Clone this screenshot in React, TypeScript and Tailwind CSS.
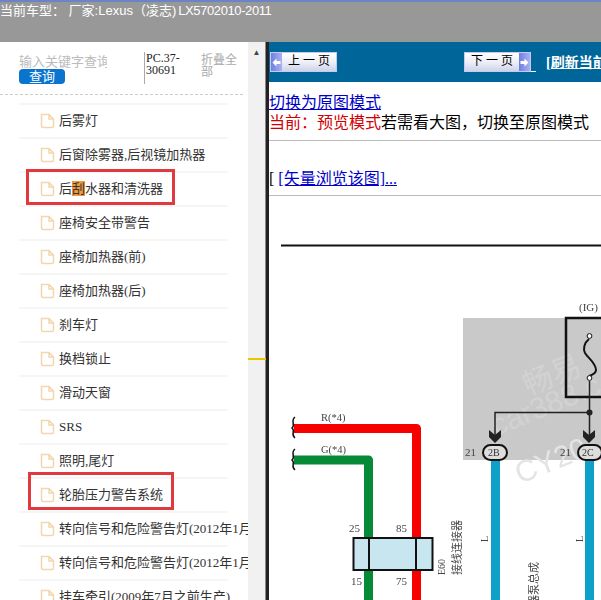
const items = [
  { label: "后雾灯" },
  { label: "后窗除雾器,后视镜加热器" },
  { label: "后刮水器和清洗器", mark: true, boxed: "h-[36px] w-[149px] -ml-[14px] pl-[11px] pt-[4px] -mt-[4px]" },
  { label: "座椅安全带警告" },
  { label: "座椅加热器(前)" },
  { label: "座椅加热器(后)" },
  { label: "刹车灯" },
  { label: "换档锁止" },
  { label: "滑动天窗" },
  { label: "SRS" },
  { label: "照明,尾灯" },
  { label: "轮胎压力警告系统", boxed: "h-[38px] w-[146px] -ml-[12px] pl-[9px] pt-[7px] -mt-[8px]" },
  { label: "转向信号和危险警告灯(2012年1月之前生产)" },
  { label: "转向信号和危险警告灯(2012年1月之后生产)" },
  { label: "挂车牵引(2009年7月之前生产)" },
];

function FileIcon() {
  return (
    <svg width="15" height="16" viewBox="0 0 15 16" fill="none" className="shrink-0">
      <path
        d="M1.5 1.5 H9 L13.5 6 V13 Q13.5 14.5 12 14.5 H3 Q1.5 14.5 1.5 13 Z M9 1.5 V6 H13.5"
        stroke="#f3d6ae"
        strokeWidth="1.5"
      />
    </svg>
  );
}

function TreeRow({ label, mark, boxed }: { label: string; mark?: boolean; boxed?: string }) {
  return (
    <div className="h-[34px] border-b-2 border-[#f6f6f6] pl-[21px] flex items-center whitespace-nowrap">
      <div className={`flex items-center gap-[4px] ${boxed ? `border-[3px] border-[#e0393e] box-border shrink-0 ${boxed}` : ""}`}>
        <FileIcon />
        <span className="text-[13px] text-[#333]">
          {mark ? (
            <>
              后<span className="bg-[#f09a3e]">刮</span>水器和清洗器
            </>
          ) : (
            label
          )}
        </span>
      </div>
    </div>
  );
}

function PageButton({ dir }: { dir: "prev" | "next" }) {
  const prev = dir === "prev";
  const arrow = (
    <span className="w-[11px] h-full bg-gradient-to-r from-[#6f7fe0] to-[#a9b2f0] flex items-center justify-center shrink-0">
      <svg width="9" height="9" viewBox="0 0 9 9">
        <path
          d={prev ? "M0.5 4.5 L4.5 0.5 V3 H8.5 V6 H4.5 V8.5 Z" : "M8.5 4.5 L4.5 0.5 V3 H0.5 V6 H4.5 V8.5 Z"}
          fill="#fff"
        />
      </svg>
    </span>
  );
  return (
    <div className="w-[67px] h-[20px] flex border border-[#c3cbf2] bg-gradient-to-b from-white via-[#eef0f8] to-[#cfd3e8] overflow-hidden shrink-0">
      {prev && arrow}
      <span className="flex-1 text-center text-[12px] leading-[17px] text-black whitespace-pre">
        {prev ? "上 一 页" : "下 一 页"}
      </span>
      {!prev && arrow}
    </div>
  );
}

function Diagram() {
  return (
    <svg width="332" height="404" viewBox="269 196 332 404" className="block blur-[0.3px]">
      <line x1="281" y1="245.5" x2="601" y2="245.5" stroke="#111" strokeWidth="2" />
      <rect x="463" y="318" width="138" height="142" fill="#c9c9c9" />
      <text x="528" y="396" fontSize="30" fill="#d2d2d2" fontFamily="Noto Sans CJK SC" transform="rotate(-22 528 396)">畅易</text>
      <text x="496" y="436" fontSize="30" fill="#d2d2d2" fontFamily="Liberation Sans" transform="rotate(-22 496 436)">car388.c</text>
      <text x="520" y="484" fontSize="30" fill="#e4e4e4" fontFamily="Liberation Sans" transform="rotate(-22 520 484)">CY20</text>
      <text x="579" y="311" fontSize="11" fill="#444" fontFamily="Liberation Serif">(IG)</text>
      <rect x="566" y="318" width="40" height="79" fill="none" stroke="#111" strokeWidth="2.5" />
      <path d="M589 339 C584 343 583 349 585 353 C588 358 596 363 596 370 C596 373 592 375 589 376" fill="none" stroke="#111" strokeWidth="2" />
      <circle cx="589.5" cy="336" r="2.4" fill="#fff" stroke="#111" />
      <circle cx="589.5" cy="378" r="2.4" fill="#fff" stroke="#111" />
      <path d="M589.5 381 V438 M589.5 412.5 H495 V438" fill="none" stroke="#222" strokeWidth="1.5" />
      <circle cx="589.5" cy="412.5" r="3" fill="#222" />
      <path d="M489 430 L495 435 L501 430 L501 437 L495 443 L489 437 Z M583 430 L589 435 L595 430 L595 437 L589 443 L583 437 Z" fill="#222" />
      <rect x="483" y="445" width="24" height="15" rx="7.5" fill="#ddd" stroke="#111" strokeWidth="2" />
      <rect x="578" y="445" width="24" height="15" rx="7.5" fill="#ddd" stroke="#111" strokeWidth="2" />
      <text x="488" y="456" fontSize="10" fill="#333" fontFamily="Liberation Serif">2B</text>
      <text x="582" y="456" fontSize="10" fill="#333" fontFamily="Liberation Serif">2C</text>
      <text x="465" y="456" fontSize="11" fill="#444" fontFamily="Liberation Serif">21</text>
      <text x="560" y="456" fontSize="11" fill="#444" fontFamily="Liberation Serif">21</text>
      <rect x="491" y="461" width="9" height="139" fill="#0ea0c8" />
      <rect x="585" y="461" width="9" height="139" fill="#0ea0c8" />
      <path d="M294 428.5 H416.5 V600" fill="none" stroke="#f70000" strokeWidth="9" strokeLinejoin="round" />
      <path d="M294 460 H368.5 V600" fill="none" stroke="#058a38" strokeWidth="9" strokeLinejoin="round" />
      <path d="M295 417 C290 421 296 425 292 428 C296 431 290 434 295 438 M295 449 C290 453 296 457 292 460 C296 463 290 466 295 470" fill="none" stroke="#111" strokeWidth="1.5" />
      <text x="321" y="421" fontSize="10.5" fill="#444" fontFamily="Liberation Serif">R(*4)</text>
      <text x="321" y="453" fontSize="10.5" fill="#444" fontFamily="Liberation Serif">G(*4)</text>
      <rect x="353.5" y="538" width="79" height="32" fill="#c8e6f0" stroke="#111" strokeWidth="2" />
      <line x1="369" y1="538" x2="369" y2="570" stroke="#111" strokeWidth="2" />
      <line x1="416" y1="538" x2="416" y2="570" stroke="#111" strokeWidth="2" />
      <text x="349" y="532" fontSize="11" fill="#444" fontFamily="Liberation Serif">25</text>
      <text x="396" y="532" fontSize="11" fill="#444" fontFamily="Liberation Serif">85</text>
      <text x="351" y="585" fontSize="11" fill="#444" fontFamily="Liberation Serif">15</text>
      <text x="396" y="585" fontSize="11" fill="#444" fontFamily="Liberation Serif">75</text>
      <text x="0" y="0" fontSize="10" fill="#444" fontFamily="Liberation Serif" transform="translate(445 575) rotate(-90)">E60</text>
      <text x="0" y="0" fontSize="11" fill="#444" fontFamily="Noto Sans CJK SC, serif" transform="translate(461 575) rotate(-90)">接线连接器</text>
      <text x="0" y="0" fontSize="10" fill="#444" fontFamily="Liberation Serif" transform="translate(488 542) rotate(-90)">L</text>
      <text x="0" y="0" fontSize="10" fill="#444" fontFamily="Liberation Serif" transform="translate(583 542) rotate(-90)">L</text>
      <text x="0" y="0" fontSize="11" fill="#444" fontFamily="Noto Sans CJK SC, serif" textAnchor="end" transform="translate(538 562) rotate(-90)">清洗器泵总成</text>
    </svg>
  );
}

export default function App() {
  return (
    <div className="w-[601px] h-[600px] overflow-hidden bg-white font-['Liberation_Serif','Noto_Sans_CJK_SC',serif]">
      <div className="h-[42px] bg-[#989898] border-t-[2px] border-[#6b84c8] text-white text-[13px] leading-[15px] font-['Liberation_Sans','Noto_Sans_CJK_SC',sans-serif] whitespace-nowrap pt-[1px]">
        当前车型： 厂家:Lexus（凌志)<span className="ml-[2px] tracking-[-0.4px]">LX5702010-2011</span>
      </div>
      <div className="flex h-[558px]">
        <div className="w-[266px] h-full overflow-hidden relative shrink-0">
          <div className="flex pl-[19px] pt-[10px] h-[53px] border-b border-dashed border-[#ccc] w-[243px]">
            <div className="w-[125px]">
              <div className="text-[13px] leading-[14px] text-[#bbb] w-[88px] overflow-hidden whitespace-nowrap mt-[3px]">输入关键字查询</div>
              <div className="w-[46px] h-[15px] rounded-[4px] bg-[#0a74cf] text-white text-[13px] leading-[15px] text-center">查询</div>
            </div>
            <div className="w-[57px] border-l border-[#aaa] pl-[1px] text-[12px] leading-[12px] text-[#222] h-[32px]">PC.37-30691</div>
            <div className="w-[40px] pt-[2px] text-[12px] leading-[12px] text-[#aaa]">折叠全部</div>
          </div>
          <div className="ml-[19px] w-[209px] mt-[8px] border-t-2 border-[#f6f6f6]">
            {items.map((item) => (
              <TreeRow key={item.label} {...item} />
            ))}
          </div>
          <div className="absolute right-0 top-0 bottom-0 w-[18px] bg-[#f1f1f1] border-r border-[#888] text-[#444] text-[8px] text-center pt-[5px]">▲</div>
          <div className="absolute right-0 top-[316px] w-[18px] h-[2px] bg-[#e8c800]"></div>
        </div>
        <div className="flex-1 min-w-0 border-l-[3px] border-[#222] overflow-hidden">
          <div className="h-[40px] bg-[#006699] flex items-center whitespace-nowrap pl-[1px]">
            <PageButton dir="prev" />
            <div className="ml-[127px]">
              <PageButton dir="next" />
            </div>
            <span className="w-[5px] h-[20px] border-b border-white shrink-0"></span>
            <span className="ml-[10px] text-white text-[14px] font-bold underline">[刷新当前页]</span>
          </div>
          <div className="h-[59px] border-b border-[#bbb] text-[16px] leading-[20px] pt-[11px] whitespace-nowrap">
            <div className="text-[#0000c8] underline">切换为原图模式</div>
            <div className="text-black"><span className="text-[#d00000]">当前：预览模式</span>若需看大图，切换至原图模式</div>
          </div>
          <div className="h-[55px] border-b border-[#bbb] text-[16px] leading-[18px] pt-[29px] whitespace-nowrap text-[#0000c8]">
            <span className="text-black">[ </span><span className="underline">[矢量浏览该图]...</span>
          </div>
          <Diagram />
        </div>
      </div>
    </div>
  );
}
